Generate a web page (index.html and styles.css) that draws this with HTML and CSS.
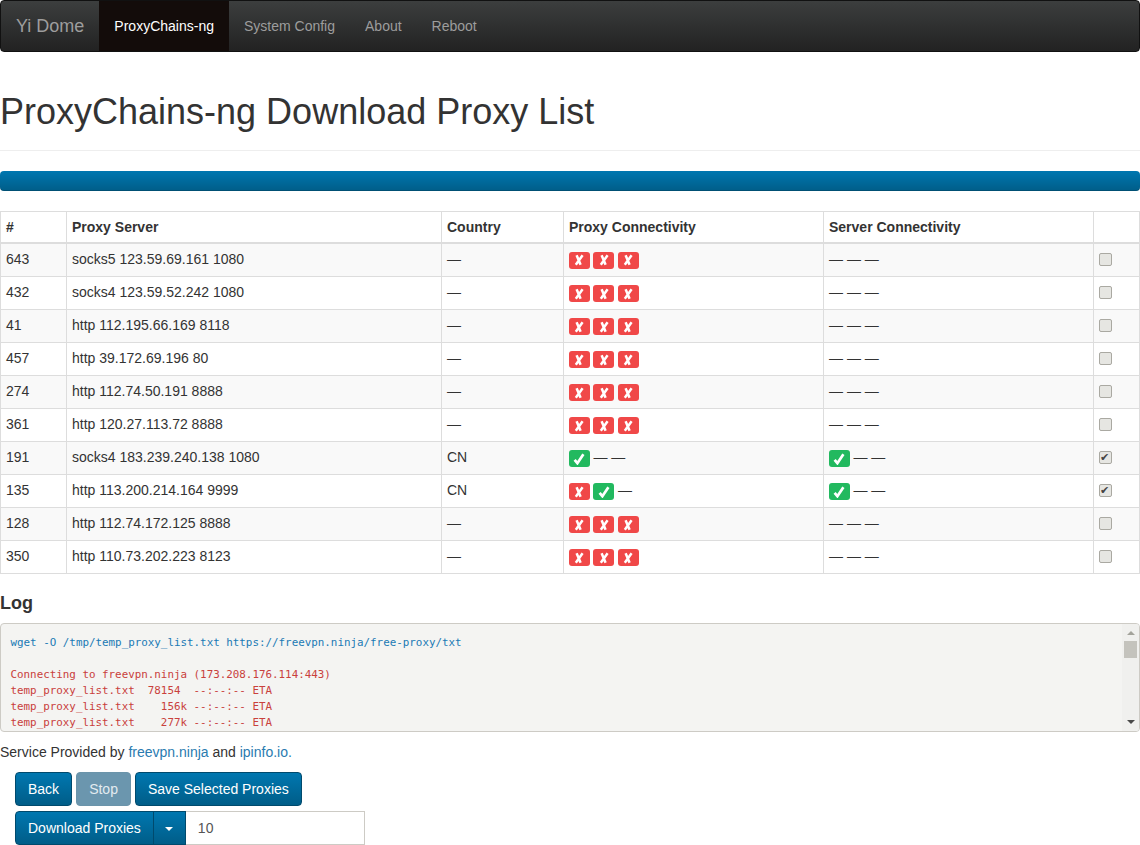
FILE: index.html
```html
<!DOCTYPE html>
<html lang="en">
<head>
    <meta charset="UTF-8">
    <title>ProxyChains-ng Download Proxy List</title>
    <link rel="stylesheet" href="styles.css">
</head>
<body>
    <svg class="icon-defs" width="0" height="0">
        <symbol id="i-x" viewBox="0 0 12 12">
            <path d="M3.6 1.2 L7.6 10.8 M9.6 1.2 L2.8 10.8" fill="none" stroke="#fff" stroke-width="2.5"/>
        </symbol>
        <symbol id="i-ok" viewBox="0 0 12 12">
            <path d="M1.6 6.8 L4.4 10.2 L10.4 1.2" fill="none" stroke="#fff" stroke-width="2.7"/>
        </symbol>
    </svg>

    <nav class="navbar">
        <a class="brand" href="#">Yi Dome</a>
        <a class="nav-link active" href="#">ProxyChains-ng</a>
        <a class="nav-link" href="#">System Config</a>
        <a class="nav-link" href="#">About</a>
        <a class="nav-link" href="#">Reboot</a>
    </nav>

    <h1 class="page-title">ProxyChains-ng Download Proxy List</h1>

    <div class="progress"></div>

    <table class="proxy-table">
        <colgroup>
            <col class="col-num">
            <col class="col-server">
            <col class="col-country">
            <col class="col-proxy">
            <col class="col-conn">
            <col>
        </colgroup>
        <thead>
            <tr>
                <th>#</th>
                <th>Proxy Server</th>
                <th>Country</th>
                <th>Proxy Connectivity</th>
                <th>Server Connectivity</th>
                <th></th>
            </tr>
        </thead>
        <tbody>
            <tr>
                <td>643</td>
                <td>socks5 123.59.69.161 1080</td>
                <td>—</td>
                <td><span class="label fail"><svg><use href="#i-x"/></svg></span> <span class="label fail"><svg><use href="#i-x"/></svg></span> <span class="label fail"><svg><use href="#i-x"/></svg></span></td>
                <td>— — —</td>
                <td><input type="checkbox"></td>
            </tr>
            <tr>
                <td>432</td>
                <td>socks4 123.59.52.242 1080</td>
                <td>—</td>
                <td><span class="label fail"><svg><use href="#i-x"/></svg></span> <span class="label fail"><svg><use href="#i-x"/></svg></span> <span class="label fail"><svg><use href="#i-x"/></svg></span></td>
                <td>— — —</td>
                <td><input type="checkbox"></td>
            </tr>
            <tr>
                <td>41</td>
                <td>http 112.195.66.169 8118</td>
                <td>—</td>
                <td><span class="label fail"><svg><use href="#i-x"/></svg></span> <span class="label fail"><svg><use href="#i-x"/></svg></span> <span class="label fail"><svg><use href="#i-x"/></svg></span></td>
                <td>— — —</td>
                <td><input type="checkbox"></td>
            </tr>
            <tr>
                <td>457</td>
                <td>http 39.172.69.196 80</td>
                <td>—</td>
                <td><span class="label fail"><svg><use href="#i-x"/></svg></span> <span class="label fail"><svg><use href="#i-x"/></svg></span> <span class="label fail"><svg><use href="#i-x"/></svg></span></td>
                <td>— — —</td>
                <td><input type="checkbox"></td>
            </tr>
            <tr>
                <td>274</td>
                <td>http 112.74.50.191 8888</td>
                <td>—</td>
                <td><span class="label fail"><svg><use href="#i-x"/></svg></span> <span class="label fail"><svg><use href="#i-x"/></svg></span> <span class="label fail"><svg><use href="#i-x"/></svg></span></td>
                <td>— — —</td>
                <td><input type="checkbox"></td>
            </tr>
            <tr>
                <td>361</td>
                <td>http 120.27.113.72 8888</td>
                <td>—</td>
                <td><span class="label fail"><svg><use href="#i-x"/></svg></span> <span class="label fail"><svg><use href="#i-x"/></svg></span> <span class="label fail"><svg><use href="#i-x"/></svg></span></td>
                <td>— — —</td>
                <td><input type="checkbox"></td>
            </tr>
            <tr>
                <td>191</td>
                <td>socks4 183.239.240.138 1080</td>
                <td>CN</td>
                <td><span class="label ok"><svg><use href="#i-ok"/></svg></span> — —</td>
                <td><span class="label ok"><svg><use href="#i-ok"/></svg></span> — —</td>
                <td><input type="checkbox" checked></td>
            </tr>
            <tr>
                <td>135</td>
                <td>http 113.200.214.164 9999</td>
                <td>CN</td>
                <td><span class="label fail"><svg><use href="#i-x"/></svg></span> <span class="label ok"><svg><use href="#i-ok"/></svg></span> —</td>
                <td><span class="label ok"><svg><use href="#i-ok"/></svg></span> — —</td>
                <td><input type="checkbox" checked></td>
            </tr>
            <tr>
                <td>128</td>
                <td>http 112.74.172.125 8888</td>
                <td>—</td>
                <td><span class="label fail"><svg><use href="#i-x"/></svg></span> <span class="label fail"><svg><use href="#i-x"/></svg></span> <span class="label fail"><svg><use href="#i-x"/></svg></span></td>
                <td>— — —</td>
                <td><input type="checkbox"></td>
            </tr>
            <tr>
                <td>350</td>
                <td>http 110.73.202.223 8123</td>
                <td>—</td>
                <td><span class="label fail"><svg><use href="#i-x"/></svg></span> <span class="label fail"><svg><use href="#i-x"/></svg></span> <span class="label fail"><svg><use href="#i-x"/></svg></span></td>
                <td>— — —</td>
                <td><input type="checkbox"></td>
            </tr>
        </tbody>
    </table>

    <h4 class="log-title">Log</h4>
    <div class="log-box">
        <pre class="log-text"><span class="log-cmd">wget -O /tmp/temp_proxy_list.txt https://freevpn.ninja/free-proxy/txt</span>

<span class="log-out">Connecting to freevpn.ninja (173.208.176.114:443)
temp_proxy_list.txt  78154  --:--:-- ETA
temp_proxy_list.txt    156k --:--:-- ETA
temp_proxy_list.txt    277k --:--:-- ETA</span></pre>
        <div class="scrollbar">
            <span class="arrow-up"></span>
            <span class="thumb"></span>
            <span class="arrow-down"></span>
        </div>
    </div>

    <p class="credits">Service Provided by <a href="#">freevpn.ninja</a> and <a href="#">ipinfo.io.</a></p>

    <div class="controls">
        <div class="btn-row">
            <button class="btn">Back</button>
            <button class="btn disabled">Stop</button>
            <button class="btn">Save Selected Proxies</button>
        </div>
        <div class="input-group">
            <button class="btn btn-main">Download Proxies</button>
            <button class="btn btn-caret"><span class="caret"></span></button>
            <input class="count" type="text" value="10">
        </div>
    </div>
</body>
</html>
```

FILE: styles.css
```css
* {
    box-sizing: border-box;
}

body {
    margin: 0;
    font-family: "Liberation Sans", Arial, sans-serif;
    font-size: 14px;
    line-height: 20px;
    color: #333;
    background-color: #fff;
}

a {
    color: #2a7bb0;
    text-decoration: none;
}

.icon-defs {
    display: block;
}

/* Navbar */
.navbar {
    display: flex;
    height: 52px;
    border: 1px solid #111;
    border-radius: 4px;
    background-image: linear-gradient(to bottom, #3c3e3e 0%, #222 100%);
}

.brand {
    padding: 15px;
    font-size: 18px;
    color: #9d9d9d;
}

.nav-link {
    padding: 15px;
    color: #9d9d9d;
}

.nav-link.active {
    color: #fff;
    background-color: #130c0a;
}

/* Heading */
.page-title {
    margin: 40px 0 20px;
    padding-bottom: 18px;
    border-bottom: 1px solid #eee;
    font-size: 36px;
    font-weight: 500;
    line-height: 40px;
    color: #333;
}

.progress {
    height: 20px;
    margin-bottom: 20px;
    border-radius: 4px;
    background-image: linear-gradient(to bottom, #0077b0 0%, #005d88 100%);
    box-shadow: inset 0 -1px 0 rgba(0,0,0,0.15);
}

/* Table */
.proxy-table {
    width: 1140px;
    table-layout: fixed;
    border-collapse: collapse;
    margin-bottom: 20px;
}

.col-num { width: 66px; }
.col-server { width: 375px; }
.col-country { width: 122px; }
.col-proxy { width: 260px; }
.col-conn { width: 270px; }

.proxy-table th,
.proxy-table td {
    height: 33px;
    padding: 5px;
    border: 1px solid #ddd;
    text-align: left;
    vertical-align: top;
    line-height: 20px;
}

.proxy-table th {
    height: 31px;
    padding-bottom: 4px;
    border-bottom-width: 2px;
    font-weight: bold;
}

/* the thick header border eats into the first row */
.proxy-table tbody tr:first-child td {
    height: 34px;
}

.proxy-table tbody tr:nth-child(odd) {
    background-color: #f9f9f9;
}

.label {
    display: inline-flex;
    align-items: center;
    justify-content: center;
    width: 20.6px;
    height: 17px;
    margin-top: 3px;
    border-radius: 3px;
    vertical-align: top;
}

.label svg {
    width: 12px;
    height: 12px;
}

.label.fail {
    background-color: #f04848;
}

.label.ok {
    background-color: #22b95f;
}

.proxy-table input[type="checkbox"] {
    display: block;
    appearance: none;
    width: 13px;
    height: 13px;
    margin: 4px 0 0 0;
    border: 1px solid #aaa9a2;
    border-radius: 2px;
    background-color: #e6e6e2;
    font-size: 11px;
    line-height: 11px;
    color: #444;
    overflow: hidden;
}

.proxy-table input[type="checkbox"]:checked::after {
    content: "✔";
    font-family: "DejaVu Sans", sans-serif;
}

/* Log */
.log-title {
    margin: 0 0 10px;
    font-size: 18px;
    font-weight: bold;
    line-height: 19px;
    color: #333;
}

.log-box {
    display: flex;
    height: 109px;
    border: 1px solid #cdcbc5;
    border-radius: 4px;
    background-color: #f4f4f2;
    overflow: hidden;
}

.log-text {
    flex: 1;
    margin: 0;
    padding: 11px 10px 0 9.5px;
    font-family: "DejaVu Sans Mono", monospace;
    font-size: 10.86px;
    line-height: 16px;
    overflow: hidden;
}

.log-cmd {
    color: #1a7ab5;
}

.log-out {
    color: #c9403c;
}

.scrollbar {
    display: flex;
    flex-direction: column;
    align-items: center;
    width: 17px;
    background-color: #f0f0ee;
}

.arrow-up {
    margin: 7px 0 6px;
    border-left: 4px solid transparent;
    border-right: 4px solid transparent;
    border-bottom: 4px solid #a3a39b;
}

.thumb {
    width: 13px;
    height: 17px;
    background-color: #c4c3bd;
}

.arrow-down {
    margin: auto 0 7px;
    border-left: 4px solid transparent;
    border-right: 4px solid transparent;
    border-top: 4px solid #4a4a4a;
}

.credits {
    margin: 10px 0;
}

/* Buttons */
.controls {
    padding-left: 15px;
}

.btn-row {
    display: flex;
    gap: 4px;
    margin-bottom: 5px;
}

.btn {
    height: 34px;
    padding: 6px 12px;
    border: 1px solid #004a6d;
    border-radius: 4px;
    font-family: inherit;
    font-size: 14px;
    line-height: 20px;
    color: #fff;
    background-image: linear-gradient(to bottom, #0077b0 0%, #005d88 100%);
}

.btn.disabled {
    border-color: #6b94aa;
    background-image: none;
    background-color: #6b96ae;
    color: #e3ebf0;
}

.input-group {
    display: flex;
    width: 350px;
}

.btn-main {
    border-radius: 4px 0 0 4px;
}

.btn-caret {
    width: 33px;
    margin-left: -1px;
    padding: 6px 0;
    border-radius: 0;
}

.caret {
    display: inline-block;
    border-left: 4px solid transparent;
    border-right: 4px solid transparent;
    border-top: 4px solid #fff;
    vertical-align: middle;
}

.count {
    flex: 1;
    min-width: 0;
    height: 34px;
    padding: 6px 12px;
    border: 1px solid #cdcbc5;
    border-left: none;
    font-family: inherit;
    font-size: 14px;
    color: #555;
    outline: none;
}
```
